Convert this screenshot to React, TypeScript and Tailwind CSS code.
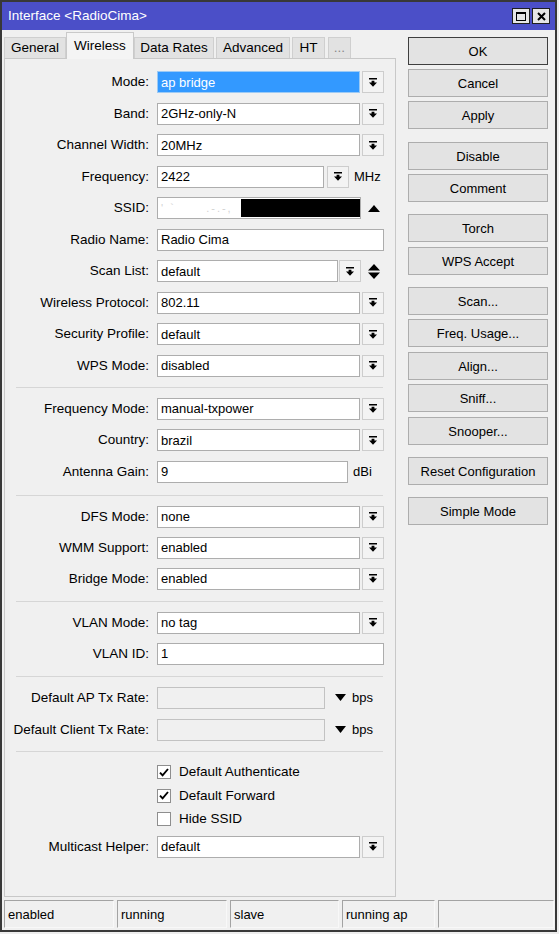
import React from 'react';

const DropIcon = () => (
  <svg width="8" height="9" viewBox="0 0 8 9">
    <rect x="0" y="0" width="8" height="1.5" fill="#000" />
    <path d="M2.6 2.8h2.8v1.8H8L4 8.8 0 4.6h2.6z" fill="#000" />
  </svg>
);

function DropBtn() {
  return (
    <div className="w-[22px] h-[22px] border border-[#cdcdcd] bg-[#f3f3f3] flex items-center justify-center shrink-0">
      <DropIcon />
    </div>
  );
}

function Field({ w, value, disabled }: { w: string; value?: React.ReactNode; disabled?: boolean }) {
  return (
    <div
      className={`${w} h-[22px] border flex items-center pl-[3px] overflow-hidden whitespace-nowrap shrink-0 ${
        disabled ? 'bg-[#f0f0f0] border-[#c2c2c2]' : 'bg-white border-[#adadad]'
      }`}
    >
      {value}
    </div>
  );
}

function Row({ label, children }: { label: string; children: React.ReactNode }) {
  return (
    <div className="flex items-center h-[22px]">
      <div className="w-[144px] text-right whitespace-nowrap text-[13.5px]">{label}</div>
      <div className="ml-[8px] flex items-center">{children}</div>
    </div>
  );
}

function Combo({ value }: { value: string }) {
  return (
    <>
      <Field w="w-[203px]" value={value} />
      <div className="ml-[2px]">
        <DropBtn />
      </div>
    </>
  );
}

const Sep = () => <div className="ml-[11px] w-[367px] border-t border-[#d6d6d6] my-[10px]" />;

function CheckRow({ label, checked }: { label: string; checked: boolean }) {
  return (
    <div className="flex items-center h-[15px]">
      <div className="ml-[152px] w-[14px] h-[14px] border border-[#8e8e8e] bg-white flex items-center justify-center">
        {checked && (
          <svg width="10" height="9" viewBox="0 0 10 9">
            <path d="M1 4.6l2.6 2.8L9 1" stroke="#000" strokeWidth="1.9" fill="none" />
          </svg>
        )}
      </div>
      <span className="ml-[8px] text-[13.5px]">{label}</span>
    </div>
  );
}

function SideBtn({ label, primary, mt }: { label: string; primary?: boolean; mt?: string }) {
  return (
    <div
      className={`${mt ?? ''} w-[140px] h-[28px] flex items-center justify-center border bg-[#e3e3e3] ${
        primary ? 'border-[#3f3f3f]' : 'border-[#adadad]'
      }`}
    >
      {label}
    </div>
  );
}

const tabs = [
  { t: 'General', c: 'w-[62px]' },
  { t: 'Wireless', c: 'w-[68px]' },
  { t: 'Data Rates', c: 'w-[80px]' },
  { t: 'Advanced', c: 'w-[74px] ml-[2px]' },
  { t: 'HT', c: 'w-[33px] ml-[2px]' },
  { t: '...', c: 'w-[23px] ml-[3px] text-[#8a8a8a]' },
];

export default function App() {
  return (
    <div className="w-[559px] h-[934px] bg-[#ededed] font-['Liberation_Sans',Arial,sans-serif] text-[13px] text-black leading-none">
      <div className="w-[557px] h-[932px] border-2 border-[#383838] bg-[#f0f0f0] flex flex-col">
        {/* title bar */}
        <div className="h-[28px] bg-[#4b4fc8] flex items-center pl-[6px] pr-[5px] shrink-0">
          <span className="text-white text-[13.5px]">Interface &lt;RadioCima&gt;</span>
          <div className="ml-auto flex gap-[2px]">
            <div className="w-[18px] h-[16px] bg-[#e6e6e6] border border-[#202020] flex items-center justify-center">
              <div className="w-[10px] h-[9px] border border-black border-t-2" />
            </div>
            <div className="w-[18px] h-[16px] bg-[#e6e6e6] border border-[#202020] flex items-center justify-center">
              <svg width="9" height="9" viewBox="0 0 9 9">
                <path d="M1 1l7 7M8 1L1 8" stroke="#000" strokeWidth="2" />
              </svg>
            </div>
          </div>
        </div>

        <div className="flex flex-1 min-h-0">
          {/* left: tabs + panel */}
          <div className="pl-[2px] flex flex-col">
            <div className="flex items-end h-[28px]">
              {tabs.map(({ t, c }) =>
                t === 'Wireless' ? (
                  <div
                    key={t}
                    className={`${c} h-[27px] bg-[#f4f4f4] border border-b-0 border-[#c9c9c9] flex items-center justify-center -mb-[1px] relative z-10 text-[13.5px]`}
                  >
                    {t}
                  </div>
                ) : (
                  <div
                    key={t}
                    className={`${c} h-[21px] bg-[#e2e2e2] border border-b-0 border-[#cfcfcf] flex items-center justify-center text-[13.5px]`}
                  >
                    {t}
                  </div>
                )
              )}
            </div>
            <div className="w-[392px] h-[839px] border border-[#c8c8c8] bg-[#f0f0f0] pt-[12px] flex flex-col">
              <div className="flex flex-col gap-[9.5px]">
                <Row label="Mode:">
                  <div className="w-[203px] h-[22px] border border-[#9ccaf5] bg-[#3399ff] text-white flex items-center pl-[3px]">
                    ap bridge
                  </div>
                  <div className="ml-[2px]">
                    <DropBtn />
                  </div>
                </Row>
                <Row label="Band:">
                  <Combo value="2GHz-only-N" />
                </Row>
                <Row label="Channel Width:">
                  <Combo value="20MHz" />
                </Row>
                <Row label="Frequency:">
                  <Field w="w-[167px]" value="2422" />
                  <div className="ml-[3px]">
                    <DropBtn />
                  </div>
                  <span className="ml-[5px]">MHz</span>
                </Row>
                <Row label="SSID:">
                  <div className="w-[204px] h-[22px] border border-[#adadad] bg-white flex items-center pl-[3px] relative">
                    <span className="text-[#d2d2d2] text-[11px] tracking-[2px] whitespace-nowrap">
                      '&nbsp;`&nbsp;&nbsp;&nbsp;&nbsp;&nbsp;&nbsp;.-.-,
                    </span>
                    <div className="absolute right-0 top-[1px] w-[119px] h-[18px] bg-black" />
                  </div>
                  <svg className="ml-[7px]" width="12" height="7" viewBox="0 0 12 7">
                    <path d="M0 7L6 0l6 7z" fill="#000" />
                  </svg>
                </Row>
                <Row label="Radio Name:">
                  <Field w="w-[227px]" value="Radio Cima" />
                </Row>
                <Row label="Scan List:">
                  <Field w="w-[181px]" value="default" />
                  <div className="ml-[1px]">
                    <DropBtn />
                  </div>
                  <svg className="ml-[7px]" width="12" height="15" viewBox="0 0 12 15">
                    <path d="M0 6.5L6 0l6 6.5zM0 8.5h12L6 15z" fill="#000" />
                  </svg>
                </Row>
                <Row label="Wireless Protocol:">
                  <Combo value="802.11" />
                </Row>
                <Row label="Security Profile:">
                  <Combo value="default" />
                </Row>
                <Row label="WPS Mode:">
                  <Combo value="disabled" />
                </Row>
              </div>
              <Sep />
              <div className="flex flex-col gap-[9.5px]">
                <Row label="Frequency Mode:">
                  <Combo value="manual-txpower" />
                </Row>
                <Row label="Country:">
                  <Combo value="brazil" />
                </Row>
                <Row label="Antenna Gain:">
                  <Field w="w-[191px]" value="9" />
                  <span className="ml-[5px]">dBi</span>
                </Row>
              </div>
              <div className="h-[2px]" />
              <Sep />
              <div className="flex flex-col gap-[9px]">
                <Row label="DFS Mode:">
                  <Combo value="none" />
                </Row>
                <Row label="WMM Support:">
                  <Combo value="enabled" />
                </Row>
                <Row label="Bridge Mode:">
                  <Combo value="enabled" />
                </Row>
              </div>
              <div className="h-[1px]" />
              <Sep />
              <div className="flex flex-col gap-[9px]">
                <Row label="VLAN Mode:">
                  <Combo value="no tag" />
                </Row>
                <Row label="VLAN ID:">
                  <Field w="w-[227px]" value="1" />
                </Row>
              </div>
              <div className="h-[1px]" />
              <Sep />
              <div className="flex flex-col gap-[10px]">
                <Row label="Default AP Tx Rate:">
                  <Field w="w-[168px]" disabled />
                  <svg className="ml-[10px]" width="11" height="7" viewBox="0 0 11 7">
                    <path d="M0 0h11L5.5 7z" fill="#000" />
                  </svg>
                  <span className="ml-[6px]">bps</span>
                </Row>
                <Row label="Default Client Tx Rate:">
                  <Field w="w-[168px]" disabled />
                  <svg className="ml-[10px]" width="11" height="7" viewBox="0 0 11 7">
                    <path d="M0 0h11L5.5 7z" fill="#000" />
                  </svg>
                  <span className="ml-[6px]">bps</span>
                </Row>
              </div>
              <Sep />
              <div className="flex flex-col gap-[8.5px] pt-[3px]">
                <CheckRow label="Default Authenticate" checked />
                <CheckRow label="Default Forward" checked />
                <CheckRow label="Hide SSID" checked={false} />
              </div>
              <div className="mt-[9px]">
                <Row label="Multicast Helper:">
                  <Combo value="default" />
                </Row>
              </div>
            </div>
          </div>

          {/* right: buttons */}
          <div className="ml-[12px] pt-[7px] flex flex-col">
            <SideBtn label="OK" primary />
            <SideBtn label="Cancel" mt="mt-[4px]" />
            <SideBtn label="Apply" mt="mt-[4px]" />
            <SideBtn label="Disable" mt="mt-[13px]" />
            <SideBtn label="Comment" mt="mt-[4px]" />
            <SideBtn label="Torch" mt="mt-[12px]" />
            <SideBtn label="WPS Accept" mt="mt-[5px]" />
            <SideBtn label="Scan..." mt="mt-[12px]" />
            <SideBtn label="Freq. Usage..." mt="mt-[4px]" />
            <SideBtn label="Align..." mt="mt-[5px]" />
            <SideBtn label="Sniff..." mt="mt-[4px]" />
            <SideBtn label="Snooper..." mt="mt-[5px]" />
            <SideBtn label="Reset Configuration" mt="mt-[12px]" />
            <SideBtn label="Simple Mode" mt="mt-[12px]" />
          </div>
        </div>

        {/* status bar */}
        <div className="h-[33px] flex items-start pt-[3px] pl-[2px] gap-[3px] shrink-0">
          {['enabled', 'running', 'slave', 'running ap', ''].map((s, i) => (
            <div
              key={i}
              className={`${
                ['w-[110px]', 'w-[110px]', 'w-[109px]', 'w-[93px]', 'w-[116px]'][i]
              } h-[28px] border-t border-l border-[#a3a3a3] border-r border-r-[#f8f8f8] border-b border-b-[#f8f8f8] flex items-center pl-[3px]`}
            >
              {s}
            </div>
          ))}
        </div>
      </div>
    </div>
  );
}
